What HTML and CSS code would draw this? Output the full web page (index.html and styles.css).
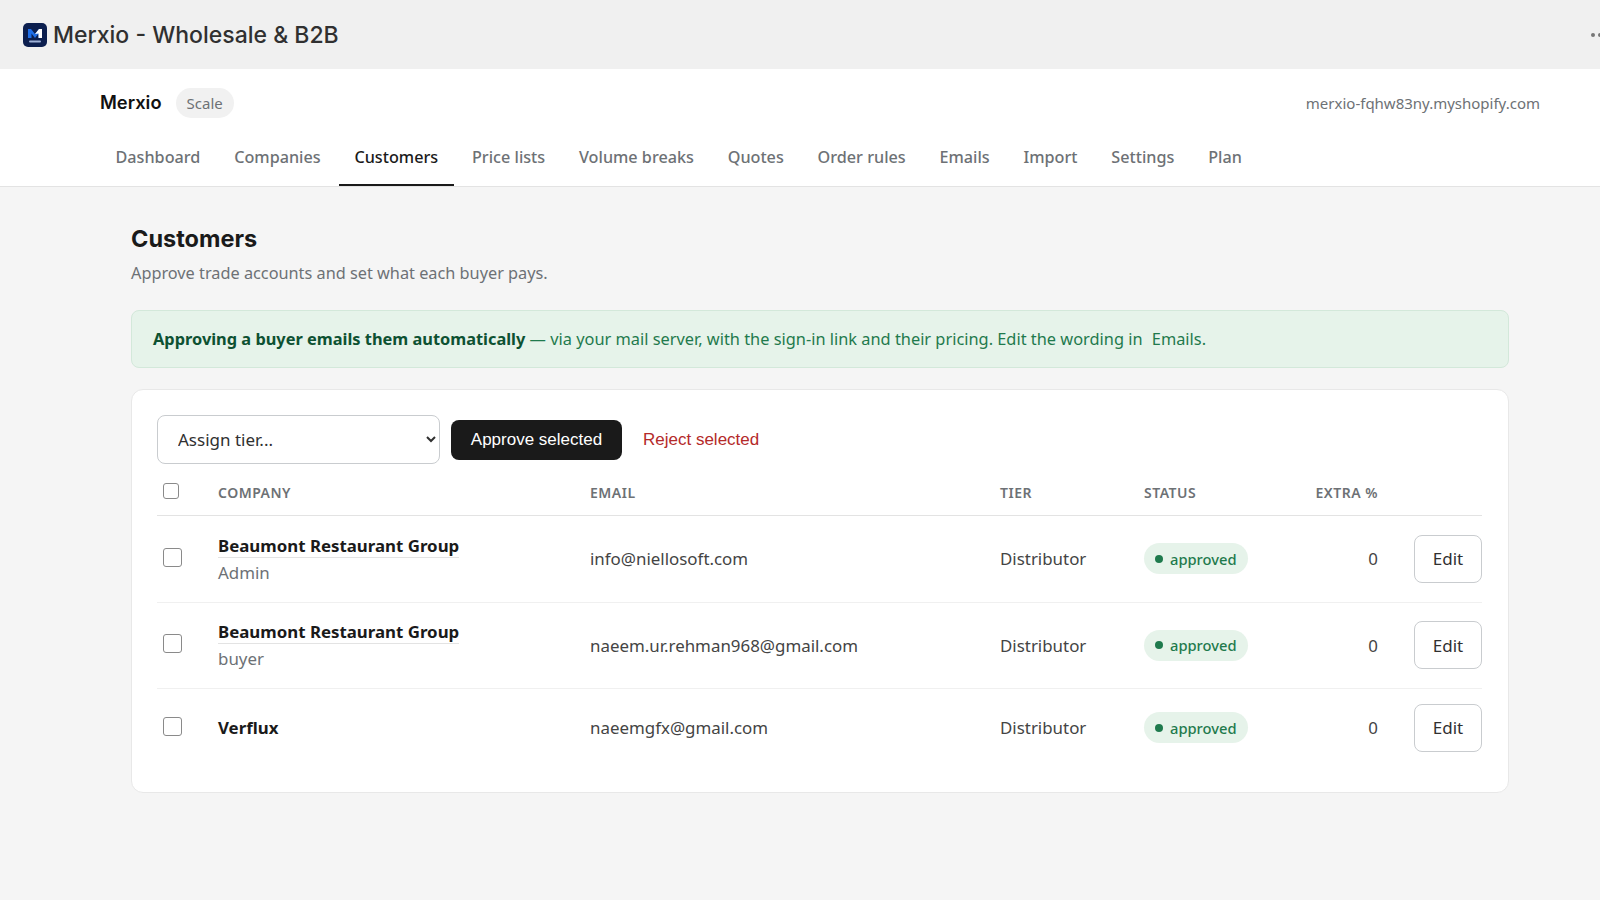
FILE: index.html
```html
<!DOCTYPE html>
<html lang="en">
<head>
    <meta charset="UTF-8">
    <meta name="viewport" content="width=device-width, initial-scale=1.0">
    <title>Merxio - Customers</title>
    <link rel="stylesheet" href="styles.css">
</head>
<body>
    <!-- Admin title bar -->
    <div class="titlebar">
        <svg class="app-icon" width="24" height="24" viewBox="0 0 24 24">
            <rect width="24" height="24" rx="5" fill="#0c1f4f"/>
            <path d="M5 15V6h3l4 5 4-5h3v9h-3.500V10.500L12 15l-3.500-4.500V15z" fill="#1f6fe8"/>
            <path d="M12 11l4-5h3v9h-3.500V10.500z" fill="#fff"/>
            <rect x="6" y="17.500" width="12" height="2" rx="1" fill="#9fb2d8"/>
        </svg>
        <span class="app-name">Merxio - Wholesale &amp; B2B</span>
        <div class="more-dots"><i></i><i></i></div>
    </div>

    <!-- App header -->
    <header class="app-header">
        <div class="brand-row">
            <div class="brand">
                <strong>Merxio</strong>
                <span class="plan-pill">Scale</span>
            </div>
            <span class="shop-domain">merxio-fqhw83ny.myshopify.com</span>
        </div>
        <nav class="tabs">
            <a href="#">Dashboard</a>
            <a href="#">Companies</a>
            <a href="#" class="active">Customers</a>
            <a href="#">Price lists</a>
            <a href="#">Volume breaks</a>
            <a href="#">Quotes</a>
            <a href="#">Order rules</a>
            <a href="#">Emails</a>
            <a href="#">Import</a>
            <a href="#">Settings</a>
            <a href="#">Plan</a>
        </nav>
    </header>

    <!-- Main Content -->
    <main class="container">
        <h1>Customers</h1>
        <p class="subtitle">Approve trade accounts and set what each buyer pays.</p>

        <div class="notice">
            <strong>Approving a buyer emails them automatically</strong> — via your mail server, with the sign-in link and their pricing. Edit the wording in <a href="#">Emails</a>.
        </div>

        <section class="card">
            <div class="bulk-bar">
                <select class="tier-select">
                    <option>Assign tier...</option>
                </select>
                <button class="btn-approve">Approve selected</button>
                <button class="btn-reject">Reject selected</button>
            </div>

            <table class="customers">
                <thead>
                    <tr>
                        <th class="col-check"><input type="checkbox" class="check-head"></th>
                        <th class="col-company">Company</th>
                        <th class="col-email">Email</th>
                        <th class="col-tier">Tier</th>
                        <th class="col-status">Status</th>
                        <th class="col-extra">Extra %</th>
                        <th class="col-edit"></th>
                    </tr>
                </thead>
                <tbody>
                    <tr>
                        <td><input type="checkbox"></td>
                        <td><a href="#" class="company-link">Beaumont Restaurant Group</a><div class="contact">Admin</div></td>
                        <td>info@niellosoft.com</td>
                        <td>Distributor</td>
                        <td><span class="status">approved</span></td>
                        <td class="num">0</td>
                        <td class="edit-cell"><button class="btn-edit">Edit</button></td>
                    </tr>
                    <tr>
                        <td><input type="checkbox"></td>
                        <td><a href="#" class="company-link">Beaumont Restaurant Group</a><div class="contact">buyer</div></td>
                        <td>naeem.ur.rehman968@gmail.com</td>
                        <td>Distributor</td>
                        <td><span class="status">approved</span></td>
                        <td class="num">0</td>
                        <td class="edit-cell"><button class="btn-edit">Edit</button></td>
                    </tr>
                    <tr>
                        <td><input type="checkbox"></td>
                        <td><strong class="company-name">Verflux</strong></td>
                        <td>naeemgfx@gmail.com</td>
                        <td>Distributor</td>
                        <td><span class="status">approved</span></td>
                        <td class="num">0</td>
                        <td class="edit-cell"><button class="btn-edit">Edit</button></td>
                    </tr>
                </tbody>
            </table>
        </section>
    </main>
</body>
</html>
```

FILE: styles.css
```css
* {
    margin: 0;
    padding: 0;
    box-sizing: border-box;
}

html, body {
    height: 100%;
    overflow: hidden;
}

body {
    font-family: "Noto Sans", "Open Sans", Arial, sans-serif;
    background-color: #f5f5f5;
    color: #303030;
}

a {
    color: inherit;
    text-decoration: none;
}

/* Title bar */
.titlebar {
    height: 69px;
    background-color: #f0f0f0;
    display: flex;
    align-items: center;
    padding-left: 23px;
    overflow: hidden;
}

.app-icon {
    flex: none;
}

.app-name {
    font-family: Inter, Arial, sans-serif;
    font-size: 23px;
    font-weight: 500;
    color: #303030;
    margin-left: 6px;
    padding-top: 1px;
}

.more-dots {
    margin-left: auto;
    margin-right: -2px;
    display: flex;
    gap: 3px;
}

.more-dots i {
    width: 4px;
    height: 4px;
    border-radius: 50%;
    background-color: #777;
}

/* App header */
.app-header {
    background-color: #fff;
    height: 118px;
    border-bottom: 1px solid #e3e3e3;
    padding: 19px 60px 0 100px;
}

.brand-row {
    display: flex;
    align-items: center;
    justify-content: space-between;
    height: 30px;
}

.brand {
    display: flex;
    align-items: center;
    gap: 14px;
}

.brand strong {
    font-family: Inter, Arial, sans-serif;
    font-size: 18.300px;
    font-weight: 600;
    color: #111;
    margin-top: -2px;
}

.plan-pill {
    font-size: 15px;
    color: #6d7175;
    background-color: #f1f1f1;
    border-radius: 15px;
    height: 30px;
    line-height: 30px;
    padding: 0 11px;
}

.shop-domain {
    font-size: 15px;
    color: #6d7175;
}

.tabs {
    display: flex;
    margin-top: 20px;
}

.tabs a {
    height: 48px;
    line-height: 38px;
    padding: 0 15.500px;
    margin-right: 2.800px;
    font-size: 16.200px;
    font-weight: 500;
    color: #6d7175;
    white-space: nowrap;
}

.tabs a.active {
    color: #1a1a1a;
    border-bottom: 2px solid #1a1a1a;
}

/* Main Container */
.container {
    padding: 35px 91px 0 131px;
}

h1 {
    font-family: Inter, Arial, sans-serif;
    font-size: 23.500px;
    font-weight: 700;
    line-height: 34px;
    color: #1a1a1a;
}

.subtitle {
    font-size: 16.300px;
    line-height: 24px;
    color: #6d7175;
    margin-top: 5px;
}

/* Notice */
.notice {
    margin-top: 25px;
    height: 58px;
    line-height: 56px;
    padding: 0 21px;
    font-size: 16.370px;
    color: #1f7a4d;
    background-color: #e6f3ea;
    border: 1px solid #d3e8da;
    border-radius: 8px;
    white-space: nowrap;
}

.notice strong {
    font-weight: 700;
    color: #0d5132;
}

.notice a {
    margin-left: 5px;
}

/* Table card */
.card {
    margin-top: 21px;
    height: 404px;
    background-color: #fff;
    border: 1px solid #e8e8e8;
    border-radius: 12px;
    padding: 25px 26px 0 25px;
}

.bulk-bar {
    display: flex;
    align-items: center;
    height: 49px;
}

.tier-select {
    width: 283px;
    height: 49px;
    padding: 0 16px;
    font-family: inherit;
    font-size: 17px;
    color: #303030;
    background-color: #fff;
    border: 1px solid #c9cccf;
    border-radius: 8px;
}

.btn-approve {
    width: 171px;
    height: 40px;
    margin: 1px 0 0 11px;
    font-family: "Liberation Sans", Arial, sans-serif;
    font-size: 17px;
    color: #fff;
    background-color: #1a1a1a;
    border: none;
    border-radius: 8px;
}

.btn-reject {
    margin: 1px 0 0 21px;
    font-family: "Liberation Sans", Arial, sans-serif;
    font-size: 17px;
    color: #b42a2a;
    background: none;
    border: none;
}

.customers {
    width: 100%;
    border-collapse: collapse;
    table-layout: fixed;
    margin-top: 6px;
}

.customers th {
    height: 45px;
    text-align: left;
    font-size: 14px;
    font-weight: 600;
    letter-spacing: 0.5px;
    text-transform: uppercase;
    color: #6d7175;
    border-bottom: 1px solid #e3e3e3;
}

.customers td {
    font-size: 16.900px;
    color: #444;
    border-bottom: 1px solid #f0f0f0;
}

.customers tbody tr {
    height: 86px;
}

.customers tbody tr:first-child {
    height: 87px;
}

.customers tbody tr:last-child {
    height: 79px;
}

.customers tbody tr:last-child td {
    border-bottom: none;
}

.col-check { width: 61px; }
.col-company { width: 372px; }
.col-email { width: 410px; }
.col-tier { width: 144px; }
.col-status { width: 155px; }
.col-extra { width: 79px; text-align: right !important; }
.col-edit { width: 104px; }

.customers input[type="checkbox"] {
    display: block;
    width: 19px;
    height: 19px;
    margin-left: 6px;
    margin-top: -3px;
    appearance: none;
    background-color: #fff;
    border: 1.500px solid #8a8a8a;
    border-radius: 3px;
}

.customers input.check-head {
    width: 16px;
    height: 16px;
    margin-top: -2px;
}

.company-link,
.company-name {
    font-size: 16.850px;
    font-weight: 700;
    color: #1a1a1a;
}

.company-link {
    display: inline-block;
    line-height: 22px;
    margin-top: 3px;
    border-bottom: 1px solid #e3e3e3;
}

.contact {
    font-size: 16.900px;
    line-height: 27px;
    margin-top: 1px;
    color: #6d7175;
}

/* Status badge */
.status {
    display: inline-flex;
    align-items: center;
    height: 31px;
    padding: 0 11px;
    font-size: 14.700px;
    font-weight: 500;
    color: #1f7a4d;
    background-color: #e6f3ea;
    border-radius: 16px;
}

.status::before {
    content: "";
    width: 8px;
    height: 8px;
    margin-right: 7px;
    border-radius: 50%;
    background-color: #1f7a4d;
}

.num {
    text-align: right;
}

.edit-cell {
    text-align: right;
}

.btn-edit {
    width: 68px;
    height: 48px;
    font-family: inherit;
    font-size: 17px;
    color: #303030;
    background-color: #fff;
    border: 1px solid #c9cccf;
    border-radius: 8px;
}
```
